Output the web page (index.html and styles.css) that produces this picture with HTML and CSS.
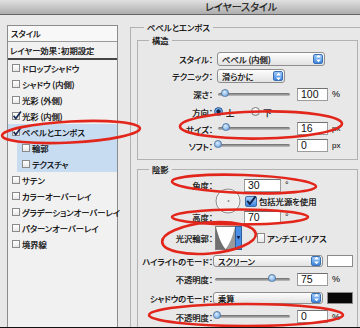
FILE: index.html
```html
<!DOCTYPE html>
<html lang="ja">
<head>
    <meta charset="UTF-8">
    <meta name="viewport" content="width=device-width, initial-scale=1.0">
    <title>レイヤースタイル</title>
    <link rel="stylesheet" href="styles.css">
</head>
<body>
<div class="window">
    <div class="titlebar">レイヤースタイル</div>
    <div class="main">

        <div class="styles">
            <div class="styles-head">スタイル</div>
            <div class="styles-preset">レイヤー効果：初期設定</div>
            <div class="item"><span class="box"></span>ドロップシャドウ</div>
            <div class="item"><span class="box"></span>シャドウ (内側)</div>
            <div class="item"><span class="box"></span>光彩 (外側)</div>
            <div class="item"><span class="box"><svg width="10" height="10" viewBox="0 0 10 10"><path d="M1.6 4.8 L3.8 7.6 L9 0.6" fill="none" stroke="#1c2d57" stroke-width="1.7"/></svg></span>光彩 (内側)</div>
            <div class="item selected"><span class="box"><svg width="10" height="10" viewBox="0 0 10 10"><path d="M1.6 4.8 L3.8 7.6 L9 0.6" fill="none" stroke="#1c2d57" stroke-width="1.7"/></svg></span>ベベルとエンボス</div>
            <div class="item sub"><span class="box"></span>輪郭</div>
            <div class="item sub"><span class="box"></span>テクスチャ</div>
            <div class="item"><span class="box"></span>サテン</div>
            <div class="item"><span class="box"></span>カラーオーバーレイ</div>
            <div class="item"><span class="box"></span>グラデーションオーバーレイ</div>
            <div class="item"><span class="box"></span>パターンオーバーレイ</div>
            <div class="item"><span class="box"></span>境界線</div>
        </div>

        <fieldset class="group bevel">
            <legend>ベベルとエンボス</legend>

            <fieldset class="group inner">
                <legend>構造</legend>
                <div class="form structure">
                    <label>スタイル：</label>
                    <div class="ctrl">
                        <div class="select sel-style"><span>ベベル (内側)</span><span class="stepper"><svg width="7" height="9" viewBox="0 0 7 9"><path d="M1 3.6 L3.5 0.8 L6 3.6 Z M1 5.4 L3.5 8.2 L6 5.4 Z" fill="#fff"/></svg></span></div>
                    </div>

                    <label>テクニック：</label>
                    <div class="ctrl">
                        <div class="select sel-tech"><span>滑らかに</span><span class="stepper"><svg width="7" height="9" viewBox="0 0 7 9"><path d="M1 3.6 L3.5 0.8 L6 3.6 Z M1 5.4 L3.5 8.2 L6 5.4 Z" fill="#fff"/></svg></span></div>
                    </div>

                    <label>深さ：</label>
                    <div class="ctrl">
                        <div class="slider s-struct"><span class="knob" style="left: 7px"></span></div>
                        <span class="num">100</span><span class="unit">%</span>
                    </div>

                    <label>方向：</label>
                    <div class="ctrl">
                        <span class="radio on"></span><span class="rlabel">上</span>
                        <span class="radio off"></span><span class="rlabel">下</span>
                    </div>

                    <label>サイズ：</label>
                    <div class="ctrl">
                        <div class="slider s-struct"><span class="knob" style="left: 8px"></span></div>
                        <span class="num">16</span><span class="unit px">px</span>
                    </div>

                    <label>ソフト：</label>
                    <div class="ctrl">
                        <div class="slider s-struct"><span class="knob" style="left: 0px"></span></div>
                        <span class="num">0</span><span class="unit px">px</span>
                    </div>
                </div>
            </fieldset>

            <fieldset class="group inner shade">
                <legend>陰影</legend>
                <div class="form shading">
                    <label>角度：</label>
                    <div class="dial">
                        <svg width="26" height="26" viewBox="0 0 26 26"><circle cx="13" cy="13" r="12" fill="#efefef" stroke="#8c8c8c"/><circle cx="13" cy="13" r="10.5" fill="none" stroke="#fafafa"/><circle cx="13.5" cy="13" r="1" fill="#8a8a8a"/></svg>
                    </div>
                    <div class="ctrl c3"><span class="num deg">30</span><span class="unit">°</span></div>

                    <label></label>
                    <div class="ctrl c3">
                        <span class="cb"><svg width="12" height="12" viewBox="0 0 12 12"><path d="M2.2 5.8 L4.8 9 L10.6 1.4" fill="none" stroke="#13234a" stroke-width="2"/></svg></span>
                        <span class="cblabel">包括光源を使用</span>
                    </div>

                    <label>高度：</label>
                    <div class="ctrl c3"><span class="num deg">70</span><span class="unit">°</span></div>

                    <label>光沢輪郭：</label>
                    <div class="ctrl">
                        <svg class="contour" width="27" height="24" viewBox="0 0 27 24">
                            <rect x="0.5" y="0.5" width="26" height="23" fill="#fff" stroke="#7c7c7c"/>
                            <path d="M1 1 C3 9 6 18 10.5 23 L1 23 Z" fill="#6f6f6f"/>
                            <path d="M20 1 C18 9 15 18 10.5 23 L20 23 Z" fill="#9a9a9a"/>
                            <rect x="20.5" y="0.5" width="6" height="23" fill="#4a8ee6" stroke="#2d5f9f"/>
                            <path d="M21.6 10 L25.4 10 L23.5 13.6 Z" fill="#13234a"/>
                        </svg>
                    </div>
                    <div class="ctrl c3">
                        <span class="box aa"></span><span class="cblabel">アンチエイリアス</span>
                    </div>

                    <label>ハイライトのモード：</label>
                    <div class="ctrl wide">
                        <div class="select sel-mode"><span>スクリーン</span><span class="stepper"><svg width="7" height="9" viewBox="0 0 7 9"><path d="M1 3.6 L3.5 0.8 L6 3.6 Z M1 5.4 L3.5 8.2 L6 5.4 Z" fill="#fff"/></svg></span></div>
                        <span class="swatch white"></span>
                    </div>

                    <label>不透明度：</label>
                    <div class="ctrl wide">
                        <div class="slider s-shade"><span class="knob" style="left: 57px"></span></div>
                        <span class="num">75</span><span class="unit">%</span>
                    </div>

                    <label>シャドウのモード：</label>
                    <div class="ctrl wide">
                        <div class="select sel-mode"><span>乗算</span><span class="stepper"><svg width="7" height="9" viewBox="0 0 7 9"><path d="M1 3.6 L3.5 0.8 L6 3.6 Z M1 5.4 L3.5 8.2 L6 5.4 Z" fill="#fff"/></svg></span></div>
                        <span class="swatch black"></span>
                    </div>

                    <label>不透明度：</label>
                    <div class="ctrl wide">
                        <div class="slider s-shade"><span class="knob" style="left: 2px"></span></div>
                        <span class="num">0</span><span class="unit">%</span>
                    </div>
                </div>
            </fieldset>
        </fieldset>
    </div>

    <!-- red marks drawn over the screenshot -->
    <svg class="marks" width="360" height="328" viewBox="0 0 360 328">
        <g fill="none" stroke="#e2261b" stroke-width="2.6">
            <ellipse cx="71" cy="132" rx="69" ry="10.5" transform="rotate(-3 71 132)"/>
            <ellipse cx="261" cy="125" rx="81" ry="13.5" transform="rotate(-1 261 125)"/>
            <ellipse cx="244" cy="184" rx="72" ry="9" transform="rotate(2 244 184)"/>
            <ellipse cx="240" cy="217" rx="68" ry="7.5"/>
            <ellipse cx="209" cy="238" rx="47" ry="15.5" transform="rotate(-5 209 238)"/>
            <ellipse cx="246" cy="315" rx="97" ry="11"/>
        </g>
    </svg>
</div>
</body>
</html>
```

FILE: styles.css
```css
*{
    box-sizing: border-box;
}
body{
    margin: 0;
    font-family: "Noto Sans CJK JP", sans-serif;
    font-size: 8.3px;
    font-feature-settings: "palt";
    color: #000;
    -webkit-text-stroke: 0.2px #000;
    background: #fff;
}
.window{
    position: relative;
    width: 360px;
    height: 328px;
    overflow: hidden;
    background: #e8e8e8;
    border-bottom: 1px solid #111;
}
.titlebar{
    height: 15px;
    padding-left: 205px;
    font-size: 10px;
    line-height: 14px;
    color: #1e1e1e;
    background: linear-gradient(#e0e0e0, #adadad);
    border-bottom: 1px solid #666;
}
.main{
    display: flex;
    align-items: flex-start;
}

/* left list */
.styles{
    flex: none;
    width: 111px;
    height: 320px;
    margin: 10px 0 0 7px;
    background: #f1f1f1;
    border: 1px solid #8c8c8c;
}
.styles-head{
    height: 16px;
    padding-left: 3px;
    line-height: 15px;
    background: #f8f8f8;
    border-bottom: 1px solid #9a9a9a;
}
.styles-preset{
    height: 18px;
    padding-left: 2px;
    line-height: 16px;
    border-bottom: 2px solid #454545;
}
.item{
    display: flex;
    align-items: center;
    height: 16px;
    padding-left: 4px;
    white-space: nowrap;
}
.item.selected{
    background: #c7dbf1;
}
.item.sub{
    margin-left: 9px;
    padding-left: 5px;
    background: #c7dbf1;
}
.box{
    position: relative;
    flex: none;
    width: 8px;
    height: 8px;
    margin-right: 2px;
    border: 1px solid #8a8a8a;
    background: linear-gradient(#fff, #e8e8e8);
}
.box svg{
    position: absolute;
    left: -1px;
    top: -2px;
}

/* group boxes */
.group{
    margin: 0;
    padding: 0;
    min-width: 0;
    border: 1px solid #b2b2b2;
}
.group legend{
    padding: 0 3px;
    line-height: 10px;
}
.bevel{
    flex: none;
    width: 240px;
    height: 330px;
    margin: 7px 0 0 12px;
    padding: 0 0 0 6px;
}
.bevel > legend{
    margin-left: 7px;
}
.inner{
    width: 221px;
    margin-top: 3px;
    padding: 5px 0 5px 0;
}
.inner > legend{
    margin-left: 11px;
}
.shade{
    margin-top: 4px;
    padding: 3px 0 8px 0;
}

/* form rows */
.form{
    display: grid;
    grid-template-columns: 75px 1fr;
    align-items: center;
}
.structure{
    grid-template-rows: 17px 18px 18px 17px 17px 17px;
}
.shading{
    grid-template-columns: 75px 30px 1fr;
    grid-template-rows: 16px 16px 16px 26px 19px 18px 19px 19px;
}
.form label{
    text-align: right;
    white-space: nowrap;
}
.ctrl{
    display: flex;
    align-items: center;
    padding-left: 4px;
}
.shading .ctrl{
    padding-left: 0;
}
.shading .c3{
    grid-column: 3;
}
.shading .wide{
    grid-column: 2 / 4;
}
.dial{
    grid-column: 2;
    grid-row: 1 / 4;
    display: flex;
    justify-content: center;
}
.contour{
    margin-left: 2px;
}

/* controls */
.select{
    display: flex;
    align-items: center;
    height: 14px;
    padding-left: 4px;
    border: 1px solid #8e8e8e;
    border-radius: 3px;
    background: linear-gradient(#fdfdfd, #e2e2e2);
    white-space: nowrap;
    overflow: hidden;
}
.stepper{
    display: flex;
    align-items: center;
    justify-content: center;
    width: 10px;
    height: 10px;
    margin-left: auto;
    margin-right: 1px;
    border-radius: 2px;
    background: linear-gradient(#9ccaf8, #3f86e0);
    border: 1px solid #3a6fb4;
}
.sel-style{
    width: 108px;
}
.sel-tech{
    width: 68px;
}
.sel-mode{
    width: 110px;
    height: 12px;
}
.swatch{
    width: 26px;
    height: 12px;
    margin-left: 4px;
    border: 1px solid #8a8a8a;
}
.swatch.white{
    background: #fff;
}
.swatch.black{
    background: #080808;
}
.slider{
    position: relative;
    flex: none;
    height: 3px;
    border-radius: 2px;
    background: linear-gradient(#6a6a6a, #c2c2c2);
}
.s-struct{
    width: 72px;
    margin-left: 1px;
}
.s-shade{
    width: 75px;
    margin-left: 2px;
}
.knob{
    position: absolute;
    top: -4px;
    width: 8px;
    height: 8px;
    margin-left: -4px;
    border-radius: 50% 50% 45% 45%;
    border: 1px solid #5579a3;
    background: radial-gradient(circle at 40% 35%, #dcefff, #5b98de);
}
.num{
    flex: none;
    width: 31px;
    height: 13px;
    margin-left: 7px;
    padding-left: 3px;
    border: 1px solid #9c9c9c;
    border-top-color: #707070;
    background: #fff;
    font: 10.5px/11px "Liberation Sans", sans-serif;
    -webkit-text-stroke: 0;
    color: #111;
}
.num.deg{
    width: 37px;
    margin-left: 1px;
}
.unit{
    margin-left: 4px;
    font: 9px "Liberation Sans", sans-serif;
    -webkit-text-stroke: 0;
}
.unit.px{
    font-size: 8px;
}
.radio{
    flex: none;
    width: 9px;
    height: 9px;
    border-radius: 50%;
    border: 1px solid #7a7a7a;
    background: linear-gradient(#fff, #dcdcdc);
}
.radio.on{
    margin-left: -3px;
    border-color: #2c578f;
    background: radial-gradient(circle, #162440 0 1.8px, #6ea8ee 2.4px);
}
.radio.off{
    margin-left: 17px;
}
.rlabel{
    margin-left: 3px;
}
.cb{
    position: relative;
    flex: none;
    width: 12px;
    height: 11px;
    margin-left: 2px;
    border: 1px solid #3f6da8;
    border-radius: 2px;
    background: linear-gradient(#a6d0f8, #3c84e0);
}
.cb svg{
    position: absolute;
    left: -1px;
    top: -2px;
}
.cblabel{
    margin-left: 2px;
    white-space: nowrap;
}
.box.aa{
    width: 8px;
    height: 10px;
    margin-left: 14px;
    margin-right: 0;
}
.marks{
    position: absolute;
    left: 0;
    top: 0;
    pointer-events: none;
}
```
